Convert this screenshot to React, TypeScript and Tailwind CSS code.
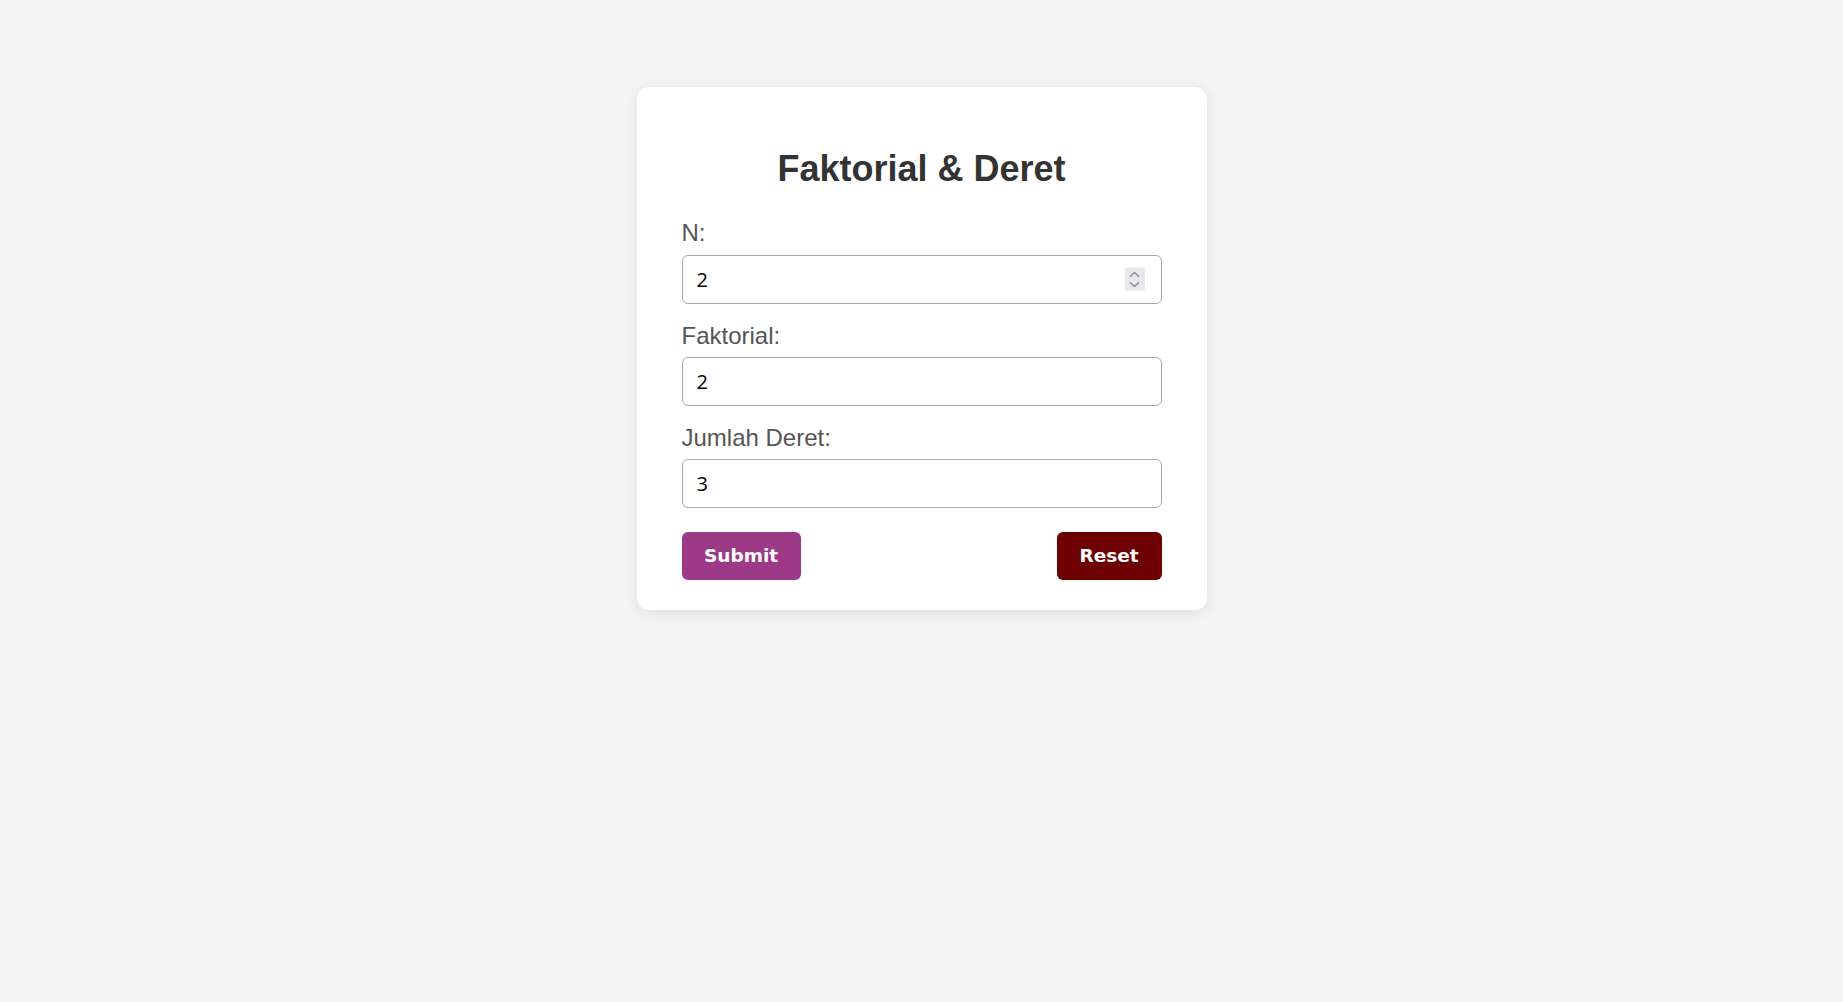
import { useState } from 'react';

function factorial(n: number) {
    let r = 1;
    for (let i = 2; i <= n; i++) r *= i;
    return r;
}

function Spinner() {
    return (
        <div className="pointer-events-none absolute right-[17px] top-1/2 -translate-y-1/2 w-[20px] h-[23px] bg-[#e9e8ef] flex flex-col items-center justify-center gap-[4px]">
            <svg width="11" height="6" viewBox="0 0 11 6" fill="none">
                <path d="M1 5.2 L5.5 1 L10 5.2" stroke="#8b8a99" strokeWidth="1.5" />
            </svg>
            <svg width="11" height="6" viewBox="0 0 11 6" fill="none">
                <path d="M1 0.8 L5.5 5 L10 0.8" stroke="#8b8a99" strokeWidth="1.5" />
            </svg>
        </div>
    );
}

export default function App() {
    const [n, setN] = useState('2');
    const [fakt, setFakt] = useState('2');
    const [deret, setDeret] = useState('3');

    // deret = 1 + 2 + ... + n
    const handleSubmit = () => {
        const v = parseInt(n, 10);
        if (isNaN(v)) return;
        setFakt(String(factorial(v)));
        setDeret(String((v * (v + 1)) / 2));
    };

    const handleReset = () => {
        setN('');
        setFakt('');
        setDeret('');
    };

    const labelCls = "block text-[24px] leading-[27.6px] text-[#555] mb-[7.5px] font-['Liberation_Sans',Arial,sans-serif]";
    const inputCls = "w-full h-[49px] border border-[#a8a8a8] rounded-[6px] px-[14px] text-[20px] text-black bg-white outline-none font-['Open_Sans','Noto_Sans',sans-serif]";

    return (
        <div className="min-h-screen bg-[#f4f4f4] pt-[87px]">
            <div className="mx-auto w-[570px] bg-white rounded-[12px] px-[45px] pt-[31px] pb-[30px] shadow-[0_3px_14px_rgba(0,0,0,0.09)]">
                <h2 className="mt-[30px] mb-[30px] text-center text-[36px] leading-[41.4px] font-bold text-[#333] font-['Liberation_Sans',Arial,sans-serif]">
                    Faktorial &amp; Deret
                </h2>

                <label className={labelCls}>N:</label>
                <div className="relative mb-[18px]">
                    <input className={inputCls} value={n} onChange={e => setN(e.target.value)} />
                    <Spinner />
                </div>

                <label className={labelCls}>Faktorial:</label>
                <input className={inputCls + " mb-[18px]"} value={fakt} readOnly />

                <label className={labelCls}>Jumlah Deret:</label>
                <input className={inputCls + " mb-[24px]"} value={deret} readOnly />

                <div className="flex justify-between">
                    <button
                        onClick={handleSubmit}
                        className="w-[119px] h-[48px] rounded-[6px] bg-[#9d3a88] text-white text-[18.5px] font-bold font-['DejaVu_Sans',Verdana,sans-serif]"
                    >
                        Submit
                    </button>
                    <button
                        onClick={handleReset}
                        className="w-[105px] h-[48px] rounded-[6px] bg-[#6d0000] text-white text-[18.5px] font-bold font-['DejaVu_Sans',Verdana,sans-serif]"
                    >
                        Reset
                    </button>
                </div>
            </div>
        </div>
    );
}
